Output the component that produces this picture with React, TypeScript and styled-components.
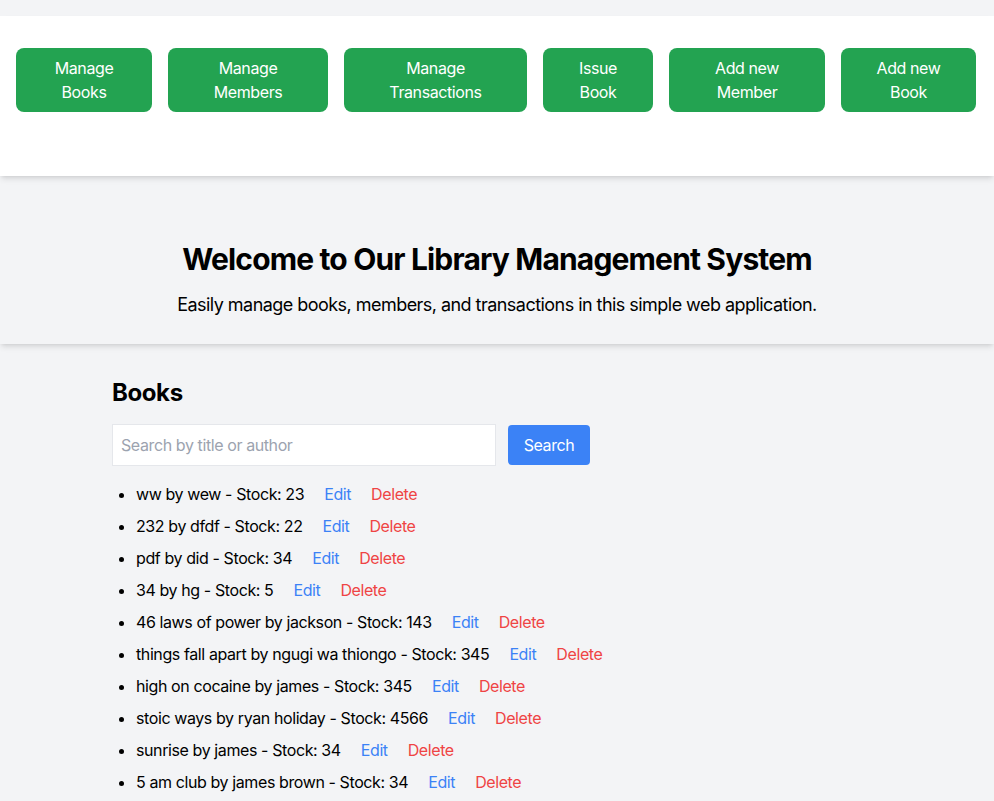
import React from "react";
import styled, { createGlobalStyle } from "styled-components";

const Global = createGlobalStyle`
  * { box-sizing: border-box; }
  html, body { margin: 0; padding: 0; background: #f3f4f6; }
  body {
    font-family: Inter, "Noto Sans", "Liberation Sans", sans-serif;
    letter-spacing: -0.025em;
    color: #000;
    -webkit-font-smoothing: antialiased;
  }
  input, button { letter-spacing: -0.025em; }
`;

const Page = styled.div`
  padding-top: 16px;
`;

const Nav = styled.nav`
  background: #ffffff;
  box-shadow: 0 4px 6px -1px rgba(0, 0, 0, 0.1), 0 2px 4px -2px rgba(0, 0, 0, 0.1);
  padding: 32px 16px;
  height: 160px;
  position: relative;
  z-index: 2;
`;

const NavRow = styled.div`
  display: flex;
  align-items: flex-start;
  gap: 16px;
`;

const NavButton = styled.a<{ $w: number }>`
  display: flex;
  flex-direction: column;
  align-items: center;
  justify-content: center;
  text-align: center;
  width: ${(p) => p.$w}px;
  height: 64px;
  padding: 8px 12px;
  background: #23a351;
  color: #ffffff;
  border-radius: 8px;
  font-size: 16px;
  line-height: 24px;
  text-decoration: none;
  flex-shrink: 0;
`;

const NavLine = styled.span`
  display: block;
  white-space: nowrap;
`;

const Hero = styled.header`
  background: #f3f4f6;
  box-shadow: 0 4px 6px -1px rgba(0, 0, 0, 0.1), 0 2px 4px -2px rgba(0, 0, 0, 0.1);
  height: 168px;
  padding-top: 65px;
  text-align: center;
  position: relative;
  z-index: 1;
`;

const HeroTitle = styled.h1`
  margin: 0 0 14px;
  font-size: 30px;
  line-height: 36px;
  font-weight: 700;
  letter-spacing: -0.028em;
`;

const HeroText = styled.p`
  margin: 0;
  font-size: 18px;
  line-height: 28px;
  letter-spacing: -0.03em;
`;

const Main = styled.main`
  max-width: 770px;
  margin: 0 auto;
  padding-top: 33px;
`;

const SectionTitle = styled.h2`
  margin: 0 0 15px;
  font-size: 24px;
  line-height: 32px;
  font-weight: 700;
`;

const SearchRow = styled.div`
  display: flex;
  align-items: center;
  margin-bottom: 16px;
`;

const SearchInput = styled.input`
  width: 384px;
  height: 42px;
  padding: 8px;
  border: 1px solid #e5e7eb;
  background: #fff;
  font-family: inherit;
  font-size: 16px;
  color: #000;
  outline: none;
  &::placeholder { color: #9ca3af; }
`;

const SearchButton = styled.button`
  margin-left: 12px;
  height: 40px;
  width: 82px;
  padding: 0;
  background: #3b82f6;
  color: #fff;
  border: none;
  border-radius: 4px;
  font-family: inherit;
  font-size: 16px;
  cursor: pointer;
`;

const List = styled.ul`
  margin: 0;
  padding-left: 24px;
  list-style: disc;
`;

const Item = styled.li`
  font-size: 16px;
  line-height: 24px;
  margin-bottom: 8px;
`;

const Action = styled.button<{ $tone: "edit" | "delete" }>`
  margin-left: 20px;
  padding: 0;
  border: none;
  background: none;
  font-family: inherit;
  font-size: 16px;
  line-height: 24px;
  color: ${(p) => (p.$tone === "edit" ? "#3b82f6" : "#ef4444")};
  cursor: pointer;
`;

const navItems = [
  { lines: ["Manage", "Books"], w: 136 },
  { lines: ["Manage", "Members"], w: 160 },
  { lines: ["Manage", "Transactions"], w: 183 },
  { lines: ["Issue", "Book"], w: 110 },
  { lines: ["Add new", "Member"], w: 156 },
  { lines: ["Add new", "Book"], w: 135 },
];

const books = [
  "ww by wew - Stock: 23",
  "232 by dfdf - Stock: 22",
  "pdf by did - Stock: 34",
  "34 by hg - Stock: 5",
  "46 laws of power by jackson - Stock: 143",
  "things fall apart by ngugi wa thiongo - Stock: 345",
  "high on cocaine by james - Stock: 345",
  "stoic ways by ryan holiday - Stock: 4566",
  "sunrise by james - Stock: 34",
  "5 am club by james brown - Stock: 34",
];

export default function App() {
  return (
    <Page>
      <Global />
      <Nav>
        <NavRow>
          {navItems.map((n) => (
            <NavButton key={n.lines.join(" ")} href="#" $w={n.w}>
              {n.lines.map((l) => (
                <NavLine key={l}>{l}</NavLine>
              ))}
            </NavButton>
          ))}
        </NavRow>
      </Nav>
      <Hero>
        <HeroTitle>Welcome to Our Library Management System</HeroTitle>
        <HeroText>
          Easily manage books, members, and transactions in this simple web application.
        </HeroText>
      </Hero>
      <Main>
        <SectionTitle>Books</SectionTitle>
        <SearchRow>
          <SearchInput placeholder="Search by title or author" />
          <SearchButton>Search</SearchButton>
        </SearchRow>
        <List>
          {books.map((b) => (
            <Item key={b}>
              {b}
              <Action $tone="edit">Edit</Action>
              <Action $tone="delete">Delete</Action>
            </Item>
          ))}
        </List>
      </Main>
    </Page>
  );
}
